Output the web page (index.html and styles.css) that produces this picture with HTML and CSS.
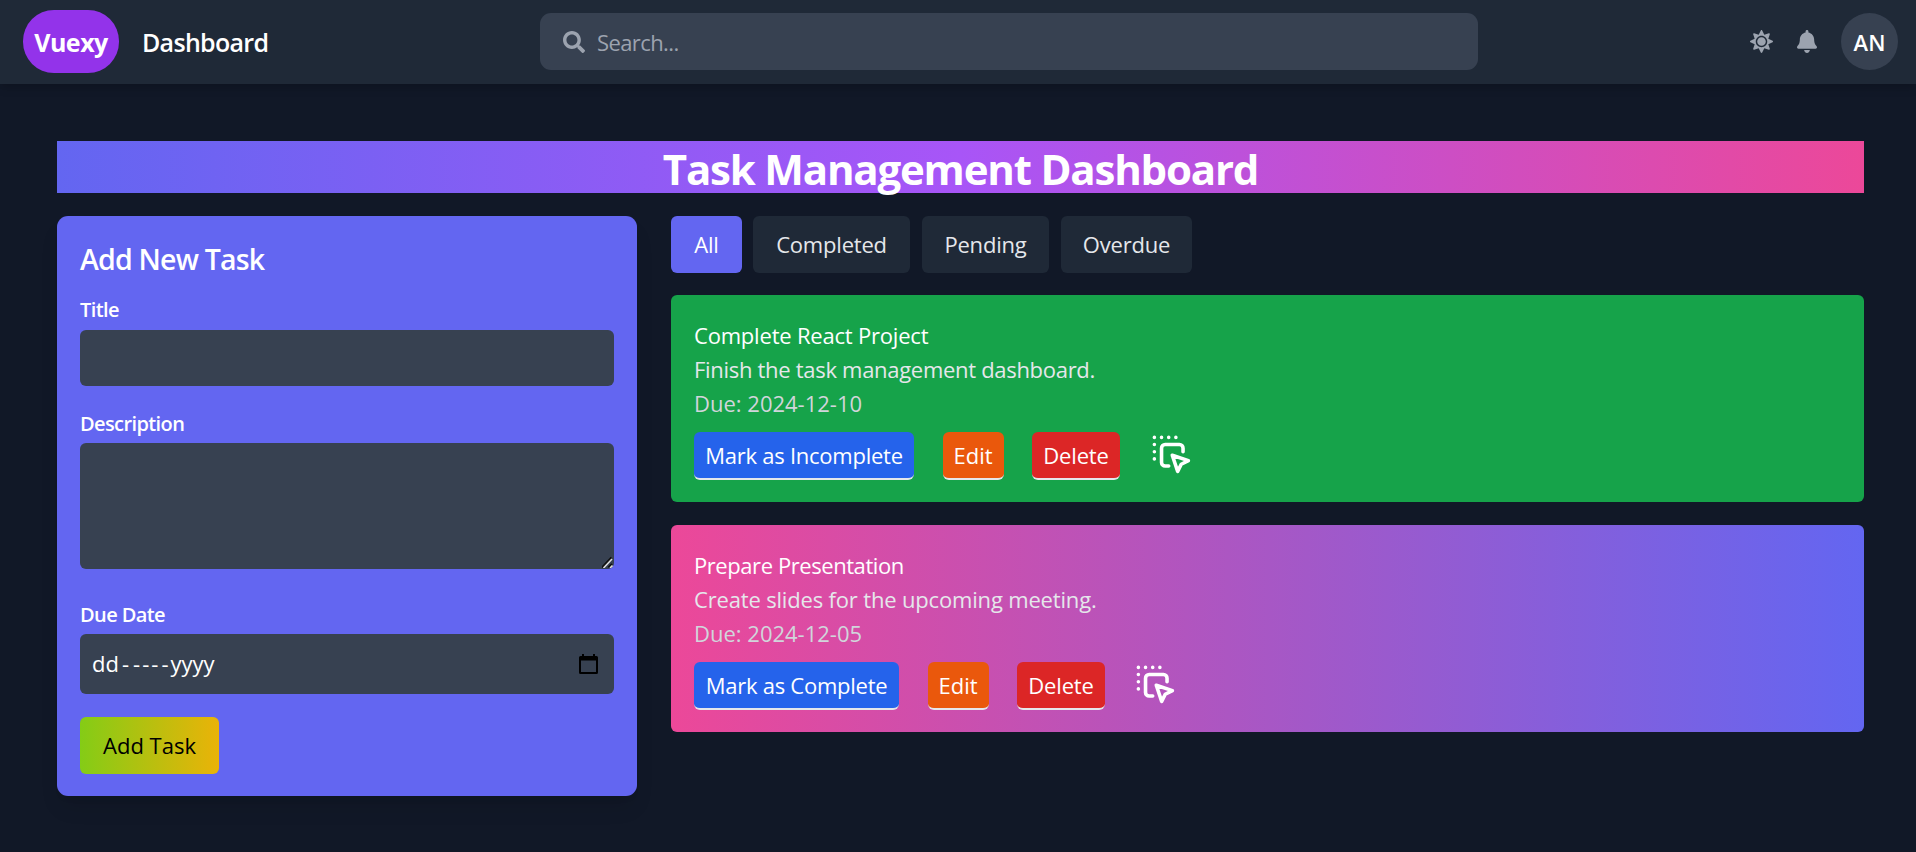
FILE: index.html
```html
<!DOCTYPE html>
<html lang="en">
<head>
<meta charset="utf-8">
<title>Task Management Dashboard</title>
<link rel="stylesheet" href="styles.css">
</head>
<body>
<header class="navbar">
  <div class="brand">
    <div class="logo">Vuexy</div>
    <span class="nav-title">Dashboard</span>
  </div>
  <div class="search">
    <svg class="search-icon" viewBox="0 0 512 512"><path d="M505 442.7L405.3 343c-4.5-4.5-10.6-7-17-7H372c27.6-35.3 44-79.7 44-128C416 93.1 322.9 0 208 0S0 93.1 0 208s93.1 208 208 208c48.3 0 92.7-16.4 128-44v16.3c0 6.4 2.5 12.5 7 17l99.7 99.7c9.4 9.4 24.6 9.4 33.9 0l28.3-28.3c9.4-9.4 9.4-24.6.1-34zM208 336c-70.7 0-128-57.2-128-128 0-70.7 57.2-128 128-128 70.7 0 128 57.2 128 128 0 70.7-57.2 128-128 128z"/></svg>
    <span class="placeholder">Search...</span>
  </div>
  <div class="actions">
    <svg class="sun" viewBox="0 0 512 512"><path d="M256 160c-52.9 0-96 43.1-96 96s43.1 96 96 96 96-43.1 96-96-43.1-96-96-96zm246.4 80.5l-94.7-47.3 33.5-100.4c4.5-13.6-8.4-26.5-21.9-21.9l-100.4 33.5-47.4-94.8c-6.4-12.8-24.6-12.8-31 0l-47.3 94.7L92.7 70.8c-13.6-4.5-26.5 8.4-21.9 21.9l33.5 100.4-94.7 47.4c-12.8 6.4-12.8 24.6 0 31l94.7 47.3-33.5 100.5c-4.5 13.6 8.4 26.5 21.9 21.9l100.4-33.5 47.3 94.7c6.4 12.8 24.6 12.8 31 0l47.3-94.7 100.4 33.5c13.6 4.5 26.5-8.4 21.9-21.9l-33.5-100.4 94.7-47.3c13-6.5 13-24.7.2-31.1zm-155.9 106c-49.9 49.9-131.1 49.9-181 0-49.9-49.9-49.9-131.1 0-181 49.9-49.9 131.1-49.9 181 0 49.9 49.9 49.9 131.1 0 181z"/></svg>
    <svg class="bell" viewBox="0 0 448 512"><path d="M224 512c35.32 0 63.97-28.65 63.97-64H160.03c0 35.35 28.65 64 63.97 64zm215.39-149.71c-19.32-20.76-55.47-51.99-55.47-154.29 0-77.7-54.48-139.9-127.94-155.16V32c0-17.67-14.32-32-31.98-32s-31.98 14.33-31.98 32v20.84C118.56 68.1 64.08 130.3 64.08 208c0 102.3-36.15 133.53-55.47 154.29-6 6.45-8.66 14.16-8.61 21.71.11 16.4 12.98 32 32.1 32h383.8c19.12 0 32-15.6 32.1-32 .05-7.55-2.61-15.27-8.61-21.71z"/></svg>
    <div class="avatar">AN</div>
  </div>
</header>
<main class="page">
  <h1 class="banner">Task Management Dashboard</h1>
  <div class="columns">
    <section class="panel">
      <h2 class="panel-title">Add New Task</h2>
      <label class="label">Title</label>
      <div class="field field-title"></div>
      <label class="label label-desc">Description</label>
      <div class="field field-desc"><svg class="grip" viewBox="0 0 11 12"><path d="M0 11.5L9.5 1.5M6.500 11.500L10 8" stroke="#111" stroke-width="2"/><path d="M1.500 12L10 3M8 12L10.500 9.500" stroke="#ddd" stroke-width="1.600"/></svg></div>
      <label class="label label-date">Due Date</label>
      <div class="field field-date">
        <span class="date"><span>dd</span><span class="sep">-</span><span class="dash">-</span><span class="dash">-</span><span class="dash">-</span><span class="sep-end">-</span><span>yyyy</span></span>
        <svg class="cal" viewBox="0 0 19 20"><path fill-rule="evenodd" d="M3 0h2v2h9V0h2v2h1.500q1.500 0 1.500 1.500v15q0 1.500-1.500 1.500h-16Q0 20 0 18.500v-15Q0 2 1.500 2H3zM2 6.500V18h15V6.500z"/></svg>
      </div>
      <button class="add">Add Task</button>
    </section>
    <section class="tasks">
      <div class="filters">
        <button class="filter active">All</button>
        <button class="filter completed">Completed</button>
        <button class="filter upcoming">Pending</button>
        <button class="filter overdue">Overdue</button>
      </div>
      <article class="card done">
        <p class="name">Complete React Project</p>
        <p class="desc">Finish the task management dashboard.</p>
        <p class="due">Due: 2024-12-10</p>
        <div class="row">
          <button class="btn mark">Mark as Incomplete</button>
          <button class="btn edit">Edit</button>
          <button class="btn delete">Delete</button>
          <svg class="drag" viewBox="0 0 24 24"><path d="M19 11v-2a2 2 0 0 0-2-2h-8a2 2 0 0 0-2 2v8a2 2 0 0 0 2 2h2M13 13l9 3-4 2-2 4-3-9M3 3v.01M7 3v.01M11 3v.01M15 3v.01M3 7v.01M3 11v.01M3 15v.01"/></svg>
        </div>
      </article>
      <article class="card pending">
        <p class="name">Prepare Presentation</p>
        <p class="desc">Create slides for the upcoming meeting.</p>
        <p class="due">Due: 2024-12-05</p>
        <div class="row">
          <button class="btn mark">Mark as Complete</button>
          <button class="btn edit">Edit</button>
          <button class="btn delete">Delete</button>
          <svg class="drag" viewBox="0 0 24 24"><path d="M19 11v-2a2 2 0 0 0-2-2h-8a2 2 0 0 0-2 2v8a2 2 0 0 0 2 2h2M13 13l9 3-4 2-2 4-3-9M3 3v.01M7 3v.01M11 3v.01M15 3v.01M3 7v.01M3 11v.01M3 15v.01"/></svg>
        </div>
      </article>
    </section>
  </div>
</main>
</body>
</html>
```
FILE: styles.css
```css
* { box-sizing: border-box; margin: 0; padding: 0; }
body { background: #111827; color: #fff; font: 22px/34px "Open Sans", "Noto Sans", sans-serif; height: 852px; overflow: hidden; white-space: nowrap; }
button { font: inherit; color: inherit; border: 0; display: flex; align-items: center; justify-content: center; }

.navbar { height: 84px; background: #1f2937; padding: 0 18px 0 23px; display: flex; align-items: flex-start; justify-content: space-between; position: relative; box-shadow: 0 6px 9px -1px rgba(0,0,0,.1), 0 3px 6px -2px rgba(0,0,0,.1); }
.brand { display: flex; align-items: center; gap: 23px; width: 517px; padding-top: 10px; }
.logo { width: 96px; height: 63px; border-radius: 31px; background: #9333ea; display: flex; align-items: center; justify-content: center; font-weight: 700; font-size: 25px; letter-spacing: -.5px; }
.nav-title { font-weight: 600; font-size: 25px; letter-spacing: -.7px; }
.search { width: 938px; height: 57px; margin-top: 13px; border-radius: 11px; background: #374151; display: flex; align-items: center; padding-left: 23px; gap: 12px; color: #9ca3af; }
.placeholder { letter-spacing: -.6px; }
.search-icon { width: 22px; height: 22px; fill: #9ca3af; }
.actions { width: 420px; display: flex; align-items: center; justify-content: flex-end; padding-top: 13px; }
.sun { width: 23px; height: 23px; fill: #9ca3af; margin-right: 24px; }
.bell { width: 20px; height: 23px; fill: #9ca3af; margin-right: 24px; }
.avatar { width: 57px; height: 57px; border-radius: 50%; background: #374151; display: flex; align-items: center; justify-content: center; font-weight: 600; }

.page { padding: 57px 52px 0 57px; }
.banner { height: 52px; line-height: 56px; text-align: center; font-size: 42px; font-weight: 700; letter-spacing: -1.2px; background: linear-gradient(to right, #6366f1, #a855f7, #ec4899); }
.columns { display: grid; grid-template-columns: 580px 1193px; gap: 34px; margin-top: 23px; align-items: start; }
.panel { height: 580px; border-radius: 11px; background: #6366f1; padding: 23px; box-shadow: 0 14px 21px -4px rgba(0,0,0,.1), 0 6px 9px -6px rgba(0,0,0,.1); }
.panel-title { font-size: 28.5px; line-height: 40px; font-weight: 600; letter-spacing: -.8px; }
.label { display: block; font-size: 20px; line-height: 28px; font-weight: 600; margin-top: 17px; letter-spacing: -.6px; }
.label-desc { margin-top: 24px; }
.label-date { margin-top: 32px; }
.field { background: #374151; border-radius: 6px; position: relative; }
.field-title { height: 56px; margin-top: 6px; }
.field-desc { height: 126px; margin-top: 5px; }
.field-date { height: 60px; margin-top: 5px; display: flex; align-items: center; justify-content: space-between; padding: 0 16px 0 12px; }
.grip { position: absolute; right: 1px; bottom: 1px; width: 11px; height: 12px; }
.date { display: flex; padding-bottom: 2px; }
.sep { width: 13px; text-align: center; }
.dash { width: 9.2px; text-align: center; }
.sep-end { width: 11px; text-align: center; }
.cal { width: 19px; height: 20px; }
.add { width: 139px; height: 57px; margin-top: 23px; padding-bottom: 2px; border-radius: 6px; color: #000; background: linear-gradient(to right, #84cc16, #eab308); }

.filters { display: flex; gap: 12px; }
.filter { height: 57px; width: 71px; padding-bottom: 2px; border-radius: 6px; background: #1f2937; color: #e5e7eb; letter-spacing: -.2px; }
.active { background: #6366f1; color: #fff; }
.completed { width: 157px; margin-left: -1px; }
.upcoming { width: 127px; }
.overdue { width: 131px; }
.card { height: 207px; margin-top: 23px; border-radius: 6px; padding: 23px; }
.filters + .card { margin-top: 22px; }
.done { background: #16a34a; }
.pending { background: linear-gradient(to right, #ec4899, #6366f1); }
.name { letter-spacing: -.2px; }
.pending .name { letter-spacing: -.43px; }
.desc { color: #e5e7eb; letter-spacing: -.3px; }
.pending .desc { letter-spacing: -.17px; }
.due { color: #d1d5db; }
.row { display: flex; margin-top: 12px; }
.btn { height: 48px; border-radius: 6px; border-bottom: 2px solid #e5e7eb; margin-right: 28.5px; }
.mark { width: 220px; background: #2563eb; letter-spacing: -.25px; }
.pending .mark { width: 205px; }
.edit { width: 61px; background: #ea580c; }
.delete { width: 88px; background: #dc2626; letter-spacing: -.15px; }
.drag { width: 43px; height: 43px; fill: none; stroke: #fff; stroke-width: 2; stroke-linecap: round; stroke-linejoin: round; }
.pending .drag { margin-left: -1px; }
```
